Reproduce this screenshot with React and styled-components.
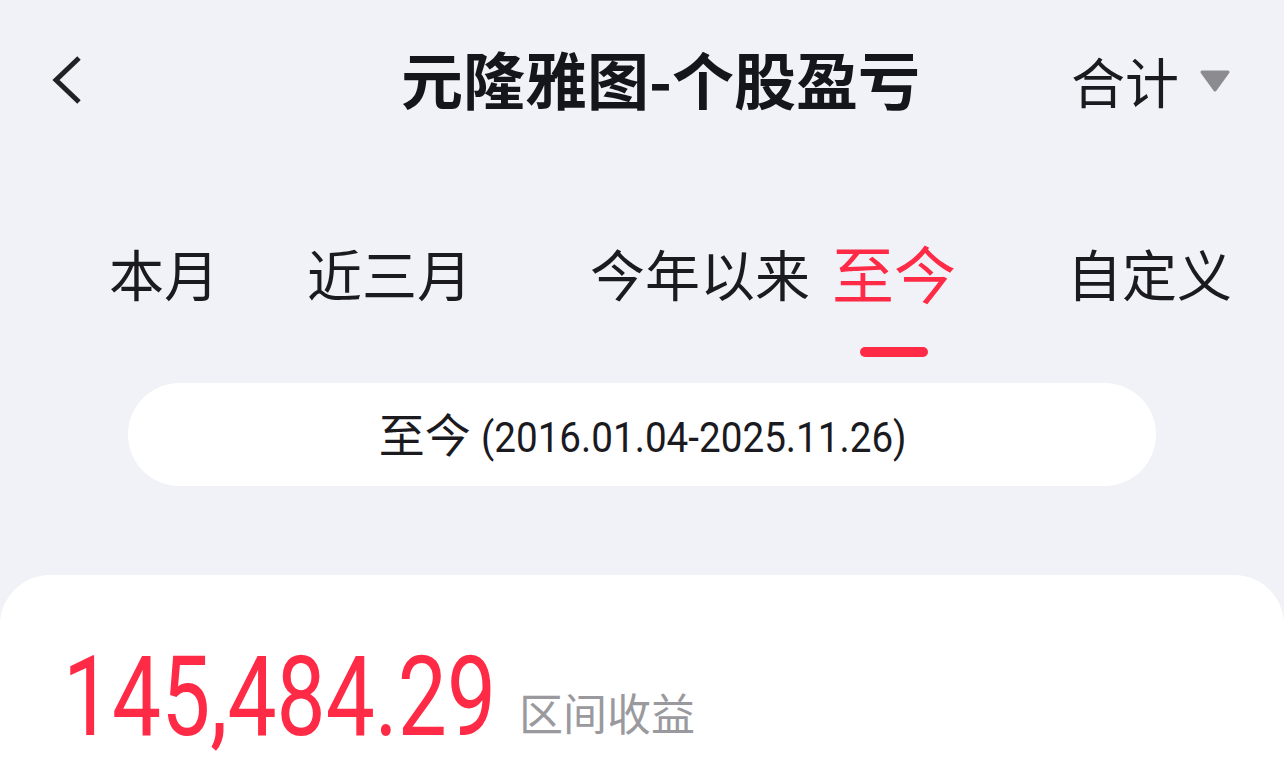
import React from "react";
import styled, { createGlobalStyle } from "styled-components";

const Global = createGlobalStyle`
  html, body { margin: 0; padding: 0; background: #f1f2f7; }
  body { font-family: "Noto Sans CJK SC", "Noto Sans", sans-serif; -webkit-font-smoothing: antialiased; }
  * { box-sizing: border-box; }
`;

const Page = styled.div`
  width: 1284px;
  height: 779px;
  overflow: hidden;
  display: flex;
  flex-direction: column;
  background: #f1f2f7;
`;

const Header = styled.header`
  height: 162px;
  display: grid;
  grid-template-columns: auto 1fr auto;
  align-items: center;
  padding: 0 53px 0 48px;
`;

const BackButton = styled.button`
  border: 0;
  background: none;
  padding: 0;
  width: 40px;
  height: 56px;
  display: flex;
  cursor: pointer;
`;

const Title = styled.h1`
  margin: 0;
  padding: 0 0 6px 162px;
  text-align: center;
  font-family: "Noto Sans CJK SC", sans-serif;
  font-weight: 700;
  font-size: 62px;
  line-height: 80px;
  color: #15151c;
`;

const Total = styled.div`
  display: flex;
  align-items: center;
  gap: 20px;
  font-family: "Noto Sans CJK SC", sans-serif;
  font-size: 54px;
  line-height: 72px;
  color: #1a1a1f;
`;

const Tabs = styled.nav`
  margin-top: 72px;
  display: flex;
  align-items: flex-start;
`;

const Tab = styled.div`
  margin-left: ${(p) => p.$ml}px;
  display: flex;
  flex-direction: column;
  align-items: center;
  font-family: "Noto Sans CJK SC", sans-serif;
  font-size: ${(p) => (p.$active ? 62 : 55)}px;
  line-height: 76px;
  color: ${(p) => (p.$active ? "#ff2a45" : "#1a1a1f")};
  white-space: nowrap;
`;

const Indicator = styled.span`
  margin-top: 37px;
  width: 68px;
  height: 10px;
  border-radius: 5px;
  background: ${(p) => (p.$active ? "#ff2a45" : "transparent")};
`;

const RangePill = styled.div`
  margin: 26px 128px 0;
  height: 103px;
  border-radius: 52px;
  background: #ffffff;
  display: flex;
  align-items: center;
  justify-content: center;
`;

const RangeText = styled.span`
  font-family: "Noto Sans CJK SC", sans-serif;
  font-size: 46px;
  line-height: 60px;
  color: #1a1a1f;
  white-space: pre;
`;

/* narrow DIN-like numerals: Roboto squeezed horizontally */
const Squeeze = styled.span`
  display: inline-block;
  width: ${(p) => p.$w}px;
  white-space: nowrap;
  font-family: Roboto, sans-serif;

  & > span {
    display: inline-block;
    transform: scaleX(${(p) => p.$s});
    transform-origin: 0 50%;
  }
`;

const DateRange = styled(Squeeze)`
  font-size: 42px;
`;

const Card = styled.section`
  margin-top: 89px;
  flex: 1;
  background: #ffffff;
  border-radius: 50px 50px 0 0;
  padding: 66px 0 0 63px;
`;

const ProfitRow = styled.div`
  display: flex;
  align-items: flex-end;
`;

const Amount = styled(Squeeze)`
  font-size: 112px;
  line-height: 112px;
  color: #ff2a45;
`;

const AmountLabel = styled.span`
  margin: 0 0 11px 24px;
  font-family: "Noto Sans CJK SC", sans-serif;
  font-size: 44px;
  line-height: 60px;
  color: #9a9a9e;
`;

const tabs = [
  { label: "本月", ml: 109 },
  { label: "近三月", ml: 88 },
  { label: "今年以来", ml: 118 },
  { label: "至今", ml: 22, active: true },
  { label: "自定义", ml: 111 },
];

export default function App() {
  return (
    <Page>
      <Global />
      <Header>
        <BackButton aria-label="返回">
          <svg width="40" height="56" viewBox="0 0 40 56">
            <polyline
              points="31,5 8,27 31,49"
              fill="none"
              stroke="#222226"
              strokeWidth="5"
              strokeLinejoin="miter"
            />
          </svg>
        </BackButton>
        <Title>元隆雅图-个股盈亏</Title>
        <Total>
          合计
          <svg width="32" height="24" viewBox="0 0 32 24">
            <path
              d="M3 3 L29 3 L16 21 Z"
              fill="#8b8b90"
              stroke="#8b8b90"
              strokeWidth="3"
              strokeLinejoin="round"
            />
          </svg>
        </Total>
      </Header>
      <Tabs>
        {tabs.map((t) => (
          <Tab key={t.label} $ml={t.ml} $active={t.active}>
            {t.label}
            <Indicator $active={t.active} />
          </Tab>
        ))}
      </Tabs>
      <RangePill>
        <RangeText>
          至今{" "}
          <DateRange $w={424} $s={0.92}>
            <span>(2016.01.04-2025.11.26)</span>
          </DateRange>
        </RangeText>
      </RangePill>
      <Card>
        <ProfitRow>
          <Amount $w={432} $s={0.78}>
            <span>145,484.29</span>
          </Amount>
          <AmountLabel>区间收益</AmountLabel>
        </ProfitRow>
      </Card>
    </Page>
  );
}
